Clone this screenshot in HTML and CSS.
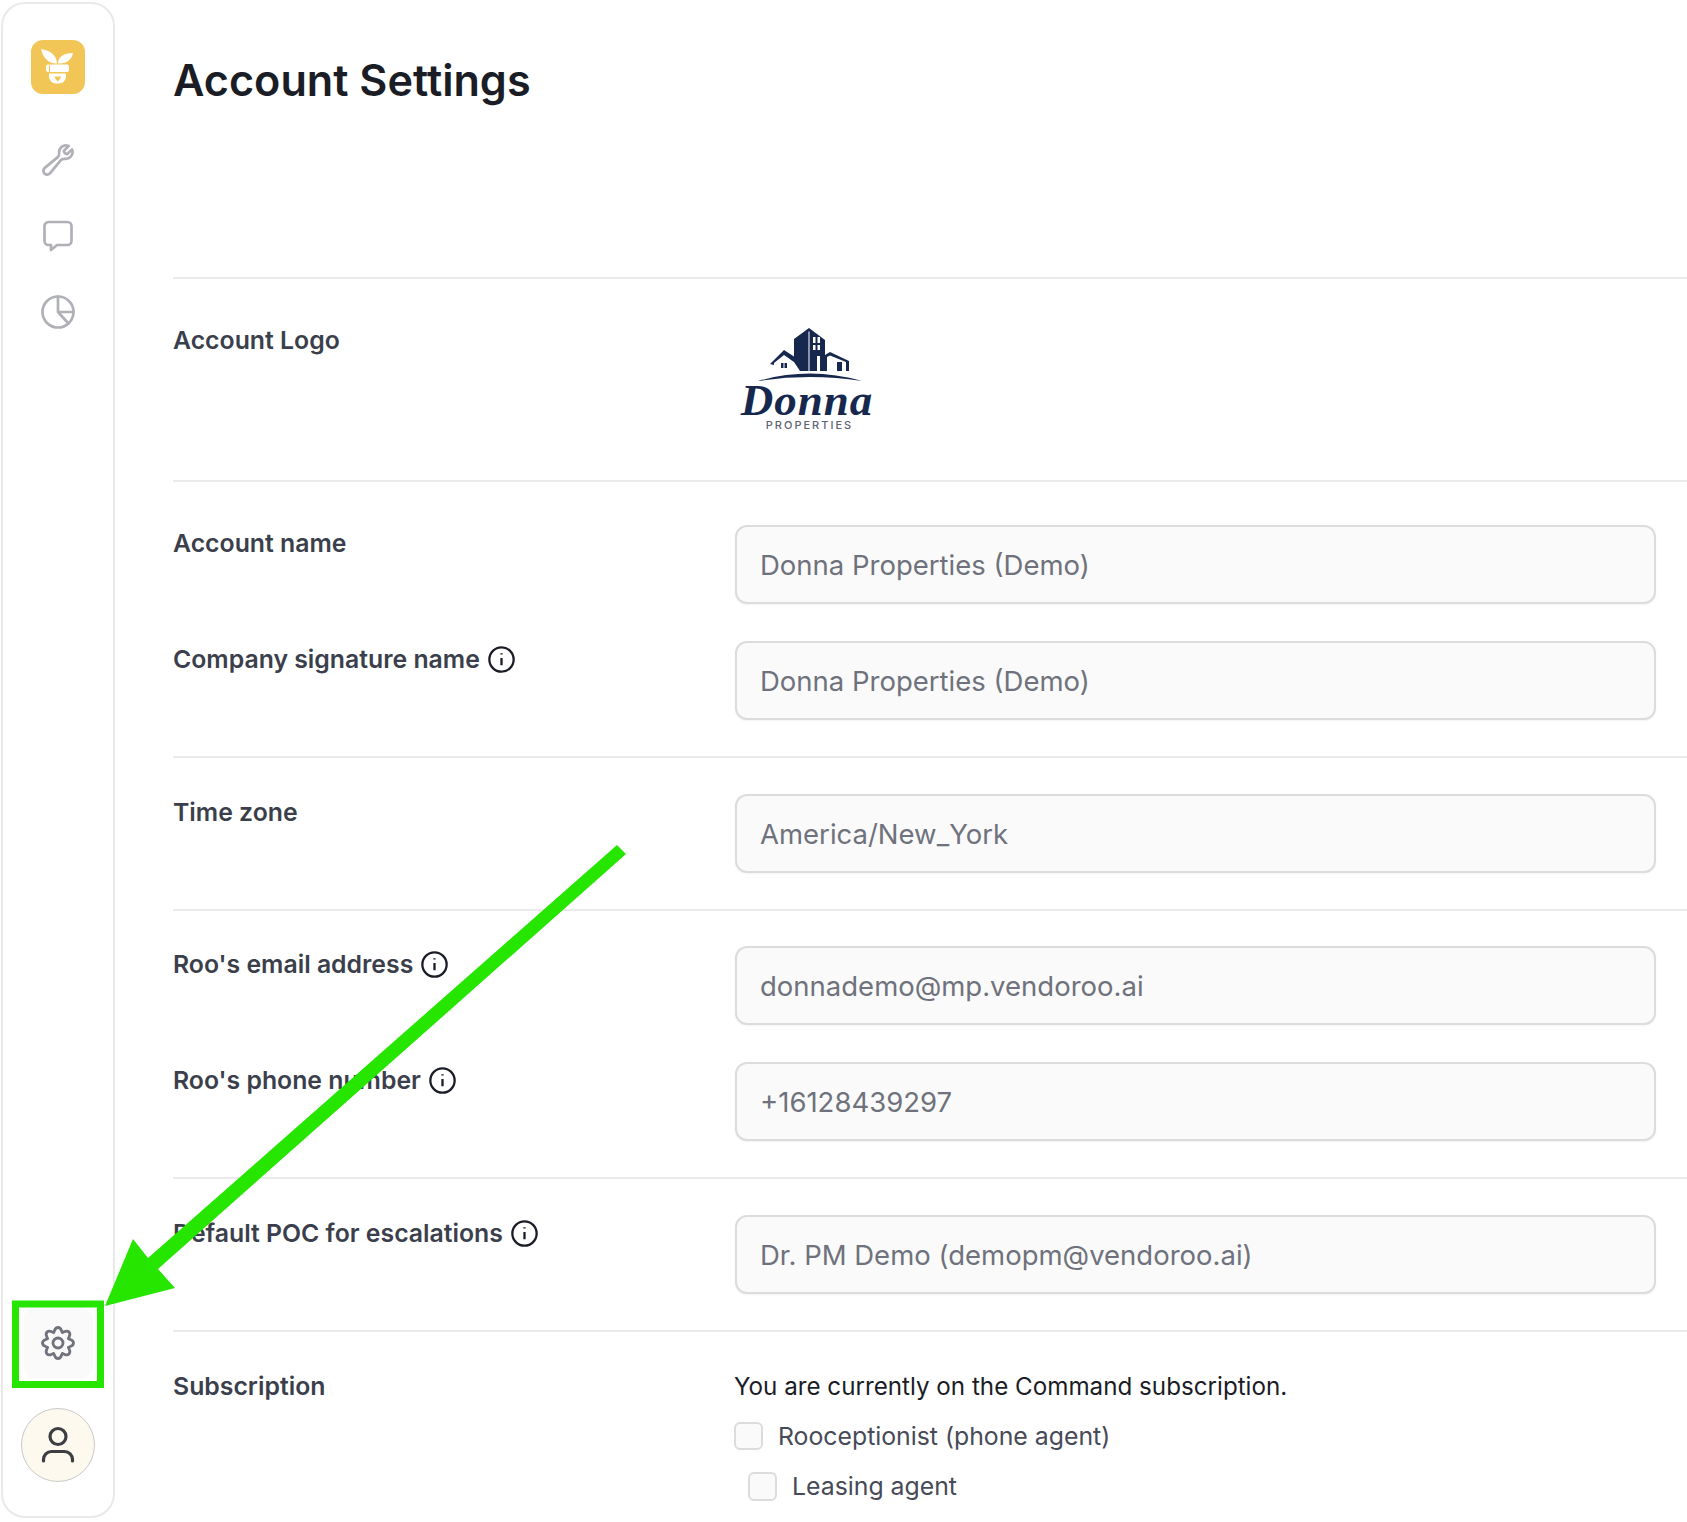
FILE: index.html
```html
<!DOCTYPE html>
<html lang="en">
<head>
<meta charset="utf-8">
<title>Account Settings</title>
<link rel="stylesheet" href="styles.css">
</head>
<body>
<div class="app">
  <aside class="sidebar">
    <div class="brand">
      <svg viewBox="0 0 54 54" width="54" height="54"><path fill="#fff" d="M10 9C15 10 25 12 26 23.500 18 24 12 18 10 9Z"/><path fill="#fff" d="M42 13C41 19 36 24 27 23.500 27 17 33 13 42 13Z"/><rect x="15" y="24.500" width="23" height="7.500" rx="2" fill="#fff"/><path stroke="#f2c557" stroke-width="1" d="M18.500 25v7"/><path fill="#fff" d="M18 33.500h17v3a7 7 0 0 1-7 7h-3a7 7 0 0 1-7-7Z"/><path fill="#f2c557" d="M23.500 36.500h6.500l-1 2.500-2.300 2.500-2.200-2.500Z"/></svg>
    </div>
    <nav class="nav">
      <a class="nav-item"><svg class="ico ico-wrench" viewBox="0 0 24 24"><path d="M21.750 6.750a4.500 4.500 0 0 1-4.884 4.484c-1.076-.091-2.264.071-2.950.904l-7.152 8.684a2.548 2.548 0 1 1-3.586-3.586l8.684-7.152c.833-.686.995-1.874.904-2.950a4.500 4.500 0 0 1 6.336-4.486l-3.276 3.276a3.004 3.004 0 0 0 2.250 2.250l3.276-3.276c.193.430.398.900.398 1.852Z"/></svg></a>
      <a class="nav-item"><svg class="ico" viewBox="0 0 38 38"><path d="M9.500 5h19a4 4 0 0 1 4 4v15a4 4 0 0 1-4 4H18l-6 5v-5H9.500a4 4 0 0 1-4-4V9a4 4 0 0 1 4-4Z"/></svg></a>
      <a class="nav-item"><svg class="ico" viewBox="0 0 38 38"><circle cx="19" cy="19" r="15.500"/><path d="M19 3.500V19h15.500M19 19l10.500 11.500"/></svg></a>
    </nav>
    <div class="side-bottom">
      <a class="settings"><svg class="gear" viewBox="-19 -19 38 38">
        <g><path d="M-4.400-10.600C-3.200-11.500-3.600-15.500 0-15.500S3.200-11.500 4.400-10.600"/></g>
        <g transform="rotate(45)"><path d="M-4.400-10.600C-3.200-11.500-3.600-15.500 0-15.500S3.200-11.500 4.400-10.600"/></g>
        <g transform="rotate(90)"><path d="M-4.400-10.600C-3.200-11.500-3.600-15.500 0-15.500S3.200-11.500 4.400-10.600"/></g>
        <g transform="rotate(135)"><path d="M-4.400-10.600C-3.200-11.500-3.600-15.500 0-15.500S3.200-11.500 4.400-10.600"/></g>
        <g transform="rotate(180)"><path d="M-4.400-10.600C-3.200-11.500-3.600-15.500 0-15.500S3.200-11.500 4.400-10.600"/></g>
        <g transform="rotate(225)"><path d="M-4.400-10.600C-3.200-11.500-3.600-15.500 0-15.500S3.200-11.500 4.400-10.600"/></g>
        <g transform="rotate(270)"><path d="M-4.400-10.600C-3.200-11.500-3.600-15.500 0-15.500S3.200-11.500 4.400-10.600"/></g>
        <g transform="rotate(315)"><path d="M-4.400-10.600C-3.200-11.500-3.600-15.500 0-15.500S3.200-11.500 4.400-10.600"/></g>
        <circle r="5"/>
      </svg></a>
      <div class="avatar"><svg class="user" viewBox="0 0 38 38"><circle cx="19" cy="10.500" r="8"/><path d="M4.500 35v-1.500a8 8 0 0 1 8-8h13a8 8 0 0 1 8 8V35"/></svg></div>
    </div>
  </aside>
  <main class="main">
    <h1 class="title">Account Settings</h1>
    <section class="sec sec-logo">
      <div class="label">Account Logo</div>
      <div class="donna">
        <svg class="donna-art" viewBox="0 0 134 60">
          <path fill="#17284f" d="M54 15 69 4 85 16V47H54Z"/>
          <path fill="#fff" d="M68.500 7.500 69.500 7.500V47H68.500Z"/>
          <path fill="#fff" d="M73 13h2.500v6H73ZM77.500 13H80v6h-2.500ZM73 21h2.500v5H73ZM77.500 21H80v5h-2.500ZM77 32h3v15h-3Z"/>
          <path fill="#17284f" d="M30 40 44 26 67 41 64 43 60 47H34V41Z"/>
          <path fill="#fff" d="M34 47V39L44 31 54 38 60 47Z"/>
          <path fill="#17284f" d="M41 39h6v5h-6Z"/>
          <path fill="#fff" d="M43.500 39h1v5h-1Z"/>
          <path fill="#17284f" d="M85 31 90 28 109 37V47H106V38L90 31.500 87 33V47H85Z"/>
          <path fill="#17284f" d="M97 38h5v9h-5Z"/>
          <path fill="#17284f" d="M18 57Q70 42 122 57 70 49 18 57Z"/>
        </svg>
        <div class="donna-name">Donna</div>
        <div class="donna-sub">PROPERTIES</div>
      </div>
    </section>
    <section class="sec sec-first">
      <div class="field"><div class="label">Account name</div><div class="input">Donna Properties (Demo)</div></div>
      <div class="field"><div class="label">Company signature name <svg class="info" viewBox="0 0 26 26"><circle cx="13" cy="13" r="11.700"/><path d="M13 11.500v7M13 7v1.200"/></svg></div><div class="input">Donna Properties (Demo)</div></div>
    </section>
    <section class="sec">
      <div class="field"><div class="label">Time zone</div><div class="input">America/New_York</div></div>
    </section>
    <section class="sec sec-roo">
      <div class="field"><div class="label">Roo's email address <svg class="info" viewBox="0 0 26 26"><circle cx="13" cy="13" r="11.700"/><path d="M13 11.500v7M13 7v1.200"/></svg></div><div class="input">donnademo@mp.vendoroo.ai</div></div>
      <div class="field"><div class="label">Roo's phone number <svg class="info" viewBox="0 0 26 26"><circle cx="13" cy="13" r="11.700"/><path d="M13 11.500v7M13 7v1.200"/></svg></div><div class="input">+16128439297</div></div>
    </section>
    <section class="sec">
      <div class="field"><div class="label">Default POC for escalations <svg class="info" viewBox="0 0 26 26"><circle cx="13" cy="13" r="11.700"/><path d="M13 11.500v7M13 7v1.200"/></svg></div><div class="input">Dr. PM Demo (demopm@vendoroo.ai)</div></div>
    </section>
    <section class="sec-sub">
      <div class="label">Subscription</div>
      <div class="sub-body">
        <p class="sub-note">You are currently on the Command subscription.</p>
        <div class="check"><span class="box"></span>Rooceptionist (phone agent)</div>
        <div class="check check-indent"><span class="box"></span>Leasing agent</div>
      </div>
    </section>
  </main>
</div>
<svg class="annot" viewBox="0 0 1687 1522" width="1687" height="1522">
  <rect x="15.500" y="1304" width="85" height="80.500" fill="none" stroke="#26e600" stroke-width="7"/>
  <path fill="#26e600" d="M617 845 626 854 158 1269 175 1288 105 1306 133 1239 148 1258Z"/>
</svg>
</body>
</html>
```
FILE: styles.css
```css
* { box-sizing: border-box; }
html, body { margin: 0; padding: 0; background: #fff; }
body { font-family: Inter, "Liberation Sans", sans-serif; color: #1b1d26; width: 1687px; height: 1522px; overflow: hidden; position: relative; }
.app { display: flex; height: 1522px; }
.sidebar { flex: 0 0 114px; margin: 2px 0 4px 1px; border: 2px solid #e9e9eb; border-radius: 24px; display: flex; flex-direction: column; align-items: center; padding-top: 36px; background: #fff; }
.brand { width: 54px; height: 54px; border-radius: 12px; background: #f2c557; }
.brand svg { display: block; }
.nav { display: flex; flex-direction: column; align-items: center; gap: 38px; margin-top: 47px; }
.nav-item { display: flex; justify-content: center; align-items: center; width: 38px; height: 38px; }
.ico { display: block; width: 38px; height: 38px; fill: none; stroke: #b0b1b7; stroke-width: 2.700; stroke-linecap: round; stroke-linejoin: round; }
.ico-wrench { width: 36px; height: 36px; stroke-width: 1.800; }
.side-bottom { margin-top: auto; display: flex; flex-direction: column; align-items: center; padding-bottom: 34px; gap: 30px; }
.settings { width: 70px; height: 70px; border-radius: 12px; background: #fafafa; display: flex; align-items: center; justify-content: center; }
.gear { width: 38px; height: 38px; fill: none; stroke: #70737d; stroke-width: 2.800; stroke-linecap: round; stroke-linejoin: round; }
.avatar { width: 74px; height: 74px; border-radius: 50%; background: #fdf9ee; border: 1px solid #c9c9c9; display: flex; align-items: center; justify-content: center; }
.user { width: 38px; height: 38px; fill: none; stroke: #3c3e44; stroke-width: 3.200; stroke-linecap: round; }
.main { flex: 1; min-width: 0; padding-left: 58px; }
.title { margin: 0; height: 277px; padding-top: 52px; font-size: 43.200px; line-height: 56px; font-weight: 600; color: #1b1d26; }
.sec { border-top: 2px solid #eaeaec; padding: 36px 31px 36px 0; display: flex; flex-direction: column; gap: 37px; }
.sec-first { padding-top: 43px; }
.sec-roo { padding-top: 35px; }
.sec-logo { flex-direction: row; align-items: flex-start; gap: 0; height: 203px; padding: 0 31px 0 0; }
.sec-logo .label { margin-top: 43px; }
.field { display: flex; align-items: flex-start; }
.label { flex: 0 0 562px; font-size: 24.800px; line-height: 36px; font-weight: 600; color: #3b3f4c; display: flex; align-items: center; gap: 8px; }
.input { flex: 1; height: 79px; border: 2px solid #dcdcdf; border-radius: 12px; background: #fafafa; box-shadow: 0 1px 2px rgba(16,24,40,.05); padding: 0 23px; font-size: 27.500px; line-height: 77px; color: #6f727c; }
.info { width: 27px; height: 27px; fill: none; stroke: #1b1d26; stroke-width: 2.200; flex: none; }
.donna { margin-top: 45px; width: 144px; display: flex; flex-direction: column; align-items: center; }
.donna-art { display: block; width: 134px; height: 60px; }
.donna-name { margin-top: -2px; font-family: "Liberation Serif", serif; font-style: italic; font-weight: 700; font-size: 45px; line-height: 36px; color: #17284f; letter-spacing: 1px; }
.donna-sub { margin-left: 5px; margin-top: 1px; font-size: 11px; line-height: 13px; font-weight: 500; letter-spacing: 2px; color: #5c6270; }
.sec-sub { border-top: 2px solid #eaeaec; display: flex; align-items: flex-start; padding-top: 37px; }
.sec-sub .label { flex: 0 0 561px; margin-top: -1px; }
.sub-body { display: flex; flex-direction: column; }
.sub-note { margin: 0; font-size: 24.200px; line-height: 36px; color: #1b1d26; }
.check { display: flex; align-items: center; gap: 15px; margin-top: 13px; height: 36px; font-size: 24.800px; color: #474a57; }
.check-indent { margin-left: 14px; margin-top: 14px; }
.box { width: 29px; height: 28px; border: 2px solid #dcdcdf; border-radius: 6px; background: #fafafa; flex: none; }
.check-indent .box { width: 29px; height: 29px; }
.annot { position: absolute; left: 0; top: 0; pointer-events: none; }
```
